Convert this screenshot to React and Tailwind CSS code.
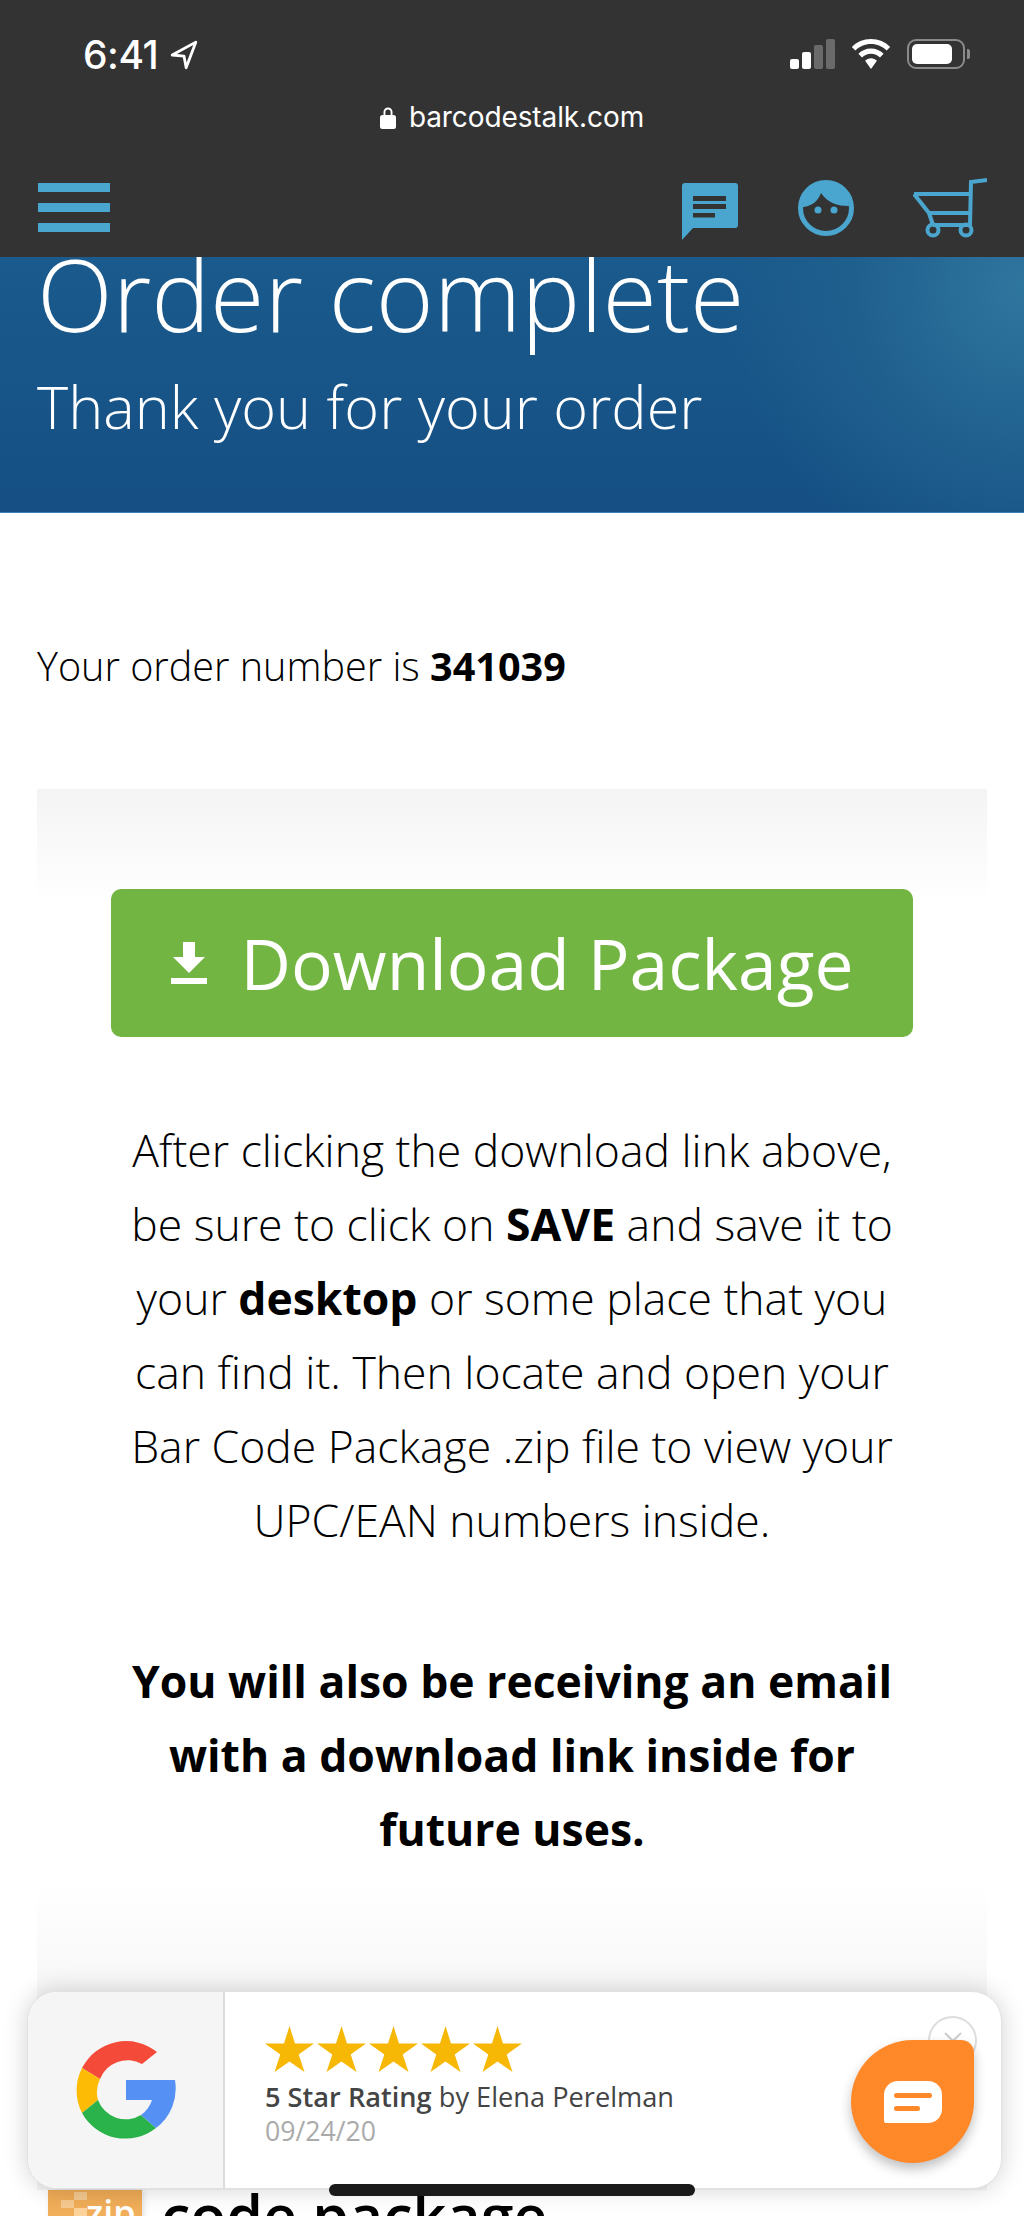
const BLUE = '#4ba6cf';

function StatusBar() {
  return (
    <div className="flex items-start justify-between h-[100px] pt-[35px] pl-[83px] pr-[54px]">
      <div className="flex items-center gap-[12px]">
        <span className="text-white text-[39px] leading-[40px] font-medium font-['Inter',sans-serif] tracking-[-0.5px]">6:41</span>
        <svg width="28" height="30" viewBox="0 0 26 28" fill="none">
          <path d="M24 2 L2 14 L13 15 L15 26 Z" stroke="white" strokeWidth="2.600" strokeLinejoin="round" />
        </svg>
      </div>
      <div className="flex items-center gap-[16px] pt-[4px]">
        <div className="flex items-end gap-[3px] h-[30px]">
          <div className="w-[9px] h-[10px] rounded-[2px] bg-white" />
          <div className="w-[9px] h-[17px] rounded-[2px] bg-white" />
          <div className="w-[9px] h-[24px] rounded-[2px] bg-[#6a6a6a]" />
          <div className="w-[9px] h-[30px] rounded-[2px] bg-[#6a6a6a]" />
        </div>
        <svg width="40" height="30" viewBox="0 0 40 30" fill="white">
          <path d="M20 0C12.500 0 5.700 3 .8 7.900l3.600 3.700C8.400 7.600 13.900 5.100 20 5.100s11.600 2.500 15.600 6.500l3.600-3.700C34.300 3 27.500 0 20 0z" />
          <path d="M20 9.600c-4.900 0-9.400 2-12.600 5.200l3.600 3.700c2.300-2.300 5.500-3.700 9-3.700s6.700 1.400 9 3.700l3.600-3.700C29.400 11.600 24.900 9.600 20 9.600z" />
          <path d="M20 19.300c-2.300 0-4.400.9-5.900 2.400L20 30l5.900-8.300c-1.500-1.500-3.600-2.400-5.900-2.400z" />
        </svg>
        <div className="flex items-center gap-[2px]">
          <div className="w-[58px] h-[30px] rounded-[9px] border-2 border-[#8a8a8a] p-[3px]">
            <div className="w-[40px] h-full rounded-[5px] bg-white" />
          </div>
          <div className="w-[3px] h-[10px] rounded-r-[2px] bg-[#8a8a8a]" />
        </div>
      </div>
    </div>
  );
}

function ChatIcon() {
  return (
    <svg width="58" height="57" viewBox="0 0 58 57" className="mt-[8px]">
      <path d="M4 0H54a3 3 0 0 1 3 3V42a3 3 0 0 1-3 3H12L1 57V3a3 3 0 0 1 3-3z" fill={BLUE} />
      <rect x="12" y="13" width="33" height="5" fill="#333333" />
      <rect x="12" y="21" width="33" height="5" fill="#333333" />
      <rect x="12" y="30" width="22" height="4.500" fill="#333333" />
    </svg>
  );
}

function FaceIcon() {
  return (
    <svg width="56" height="56" viewBox="0 0 56 56">
      <circle cx="28" cy="28" r="25.500" fill="none" stroke={BLUE} strokeWidth="5" />
      <path d="M5 27C5 11 15 2 28 2s23 9 23 24c-12 0-21-3-28-13C20 21 14 26 5 27z" fill={BLUE} />
      <circle cx="20" cy="30" r="3.500" fill={BLUE} />
      <circle cx="36" cy="30" r="3.500" fill={BLUE} />
    </svg>
  );
}

function CartIcon() {
  return (
    <svg width="74" height="60" viewBox="0 0 74 60" fill="none" stroke={BLUE} strokeWidth="4">
      <path d="M74 2 58 4 57 47H20" />
      <path d="M1 16H57M1 16 16 35H57M16 35 20 47" />
      <circle cx="20" cy="52" r="5.500" />
      <circle cx="53" cy="52" r="5.500" />
    </svg>
  );
}

function TopBar() {
  return (
    <div className="bg-[#333333]">
      <StatusBar />
      <div className="flex items-center justify-center gap-[13px] h-[34px]">
        <svg width="16" height="23" viewBox="0 0 16 23" fill="white">
          <path d="M3.500 10V6a4.500 4.500 0 0 1 9 0v4h-1.900V6a2.600 2.600 0 0 0-5.200 0v4z" />
          <rect x="0" y="9" width="16" height="14" rx="2.500" />
        </svg>
        <span className="text-white text-[28px] leading-[34px] font-['Inter',sans-serif] tracking-[-0.1px]">barcodestalk.com</span>
      </div>
      <div className="flex items-center justify-between h-[123px] pl-[38px] pr-[37px] pt-[24px]">
        <div className="flex flex-col gap-[11px] w-[72px]">
          <div className="h-[9px] bg-[#4ba6cf]" />
          <div className="h-[9px] bg-[#4ba6cf]" />
          <div className="h-[9px] bg-[#4ba6cf]" />
        </div>
        <div className="flex items-center gap-[59px]">
          <ChatIcon />
          <FaceIcon />
          <CartIcon />
        </div>
      </div>
    </div>
  );
}

function Banner() {
  return (
    <div className="h-[256px] overflow-hidden bg-[radial-gradient(circle_at_100%_12%,#2f769f_0px,#1f5f8e_170px,transparent_300px),linear-gradient(to_bottom,#1a5a8c,#154f83)] border-b border-[#3f7fb8] pl-[37px]">
      <h1 className="text-white text-[99px] leading-[110px] font-light -mt-[18px]">Order complete</h1>
      <p className="text-white text-[59.400px] leading-[70px] font-light mt-[22px]">Thank you for your order</p>
    </div>
  );
}

function Panel() {
  return (
    <div className="mx-[37px] mt-[96px] h-[1401px] pt-[100px] px-[74px] text-center bg-[linear-gradient(to_bottom,#f4f4f4_0px,#ffffff_115px,#ffffff_1095px,#f4f4f4_1240px)]">
      <div className="flex items-center justify-center gap-[34px] h-[148px] rounded-[10px] bg-[#73b543] text-white">
        <svg width="36" height="42" viewBox="0 0 36 42" fill="white">
          <path d="M12 0H24V15H34L18 31 2 15H12z" />
          <rect x="0" y="36" width="36" height="6" />
        </svg>
        <span className="text-[69.500px] leading-[90px] font-normal">Download Package</span>
      </div>
      <p className="mt-[76px] -mx-[30px] text-[44.500px] leading-[74px] font-light text-black">
        After clicking the download link above,<br />
        be sure to click on <b className="font-bold">SAVE</b> and save it to<br />
        your <b className="font-bold">desktop</b> or some place that you<br />
        can find it. Then locate and open your<br />
        Bar Code Package .zip file to view your<br />
        UPC/EAN numbers inside.
      </p>
      <p className="mt-[87px] -mx-[30px] text-[44.500px] leading-[74px] font-bold text-black">
        You will also be receiving an email<br />
        with a download link inside for<br />
        future uses.
      </p>
    </div>
  );
}

function GoogleLogo() {
  return (
    <svg width="100" height="100" viewBox="0 0 100 100">
      <path fill="#f44a3a" d="M81 12A49.500 49.500 0 0 0 6 28L24 39A29.500 29.500 0 0 1 66 24Z" />
      <path fill="#fdbb05" d="M6 28A49.500 49.500 0 0 0 6 73L22 60A29.500 29.500 0 0 1 24 39Z" />
      <path fill="#2bb34b" d="M6 73A49.500 49.500 0 0 0 80 88L65 75A29.500 29.500 0 0 1 22 60Z" />
      <path fill="#5591f5" d="M50 40H99A49.500 49.500 0 0 1 80 88L65 75A29 29 0 0 0 76 60H50Z" />
    </svg>
  );
}

function Star() {
  return (
    <svg width="49" height="46" viewBox="0 0 49 46" fill="#f6b805">
      <path d="M24.500 0 30 17.500H49L33.700 28.500 39.500 46 24.500 35.500 9.500 46 15.300 28.500 0 17.500H19z" />
    </svg>
  );
}

function ReviewPopup() {
  return (
    <div className="absolute left-[27px] top-[1991px] w-[975px] h-[198px] flex rounded-[30px] bg-white border border-[#e2e2e2] shadow-[0_0_24px_rgba(0,0,0,0.18)]">
      <div className="w-[197px] flex items-center justify-center rounded-l-[30px] bg-[#f5f5f5] border-r-2 border-[#dcdcdc]">
        <GoogleLogo />
      </div>
      <div className="pl-[40px] pt-[34px]">
        <div className="flex gap-[3px]">
          {[0, 1, 2, 3, 4].map((i) => <Star key={i} />)}
        </div>
        <p className="mt-[7px] text-[27.200px] leading-[36px] text-[#444444] font-normal">
          <span className="font-semibold">5 Star Rating</span> by Elena Perelman
        </p>
        <p className="text-[26.700px] leading-[32px] text-[#aaaaaa] font-normal">09/24/20</p>
      </div>
      <div className="absolute right-[24px] top-[24px] w-[49px] h-[49px] rounded-full border-2 border-[#dddddd] flex items-center justify-center">
        <svg width="20" height="20" viewBox="0 0 20 20" stroke="#cccccc" strokeWidth="2" fill="none">
          <path d="M2 2 18 18M18 2 2 18" />
        </svg>
      </div>
      <div className="absolute right-[27px] top-[48px] w-[123px] h-[123px] rounded-[62px_13px_62px_62px] bg-[#ff8829] shadow-[0_6px_12px_rgba(0,0,0,0.25)] flex items-center justify-center">
        <div className="w-[58px] h-[42px] rounded-t-[14px] rounded-br-[14px] rounded-bl-[2px] bg-white flex flex-col justify-center gap-[8px] px-[10px]">
          <div className="h-[5px] w-full rounded-full bg-[#ff8829]" />
          <div className="h-[5px] w-[26px] rounded-full bg-[#ff8829]" />
        </div>
      </div>
    </div>
  );
}

function ZipIcon() {
  return (
    <div className="relative w-[94px] h-[95px] shrink-0 bg-[linear-gradient(to_bottom,#eeaa55,#fdbd6b)] shadow-[2px_0_6px_rgba(0,0,0,0.12)] text-white text-[36px] font-semibold leading-[40px] pt-[3px] pl-[38px]">
      zip
      <div className="absolute left-[26px] top-[2px] w-[13px] h-[8px] bg-[#f5c98f]" />
      <div className="absolute left-[13px] top-[10px] w-[13px] h-[8px] bg-[#f5c98f]" />
      <div className="absolute left-[26px] top-[18px] w-[13px] h-[8px] bg-[#fcd39b]" />
    </div>
  );
}

export default function App() {
  return (
    <div className="relative w-[1024px] h-[2216px] overflow-hidden bg-white font-['Open_Sans',sans-serif]">
      <TopBar />
      <Banner />
      <p className="mt-[126px] pl-[37px] text-[39.600px] leading-[54px] font-light text-black">
        Your order number is <b className="font-bold">341039</b>
      </p>
      <Panel />
      <div className="flex items-start gap-[19px] pl-[48px]">
        <ZipIcon />
        <span className="-mt-[10px] text-[59px] leading-[70px] font-semibold text-black whitespace-nowrap">code package</span>
      </div>
      <ReviewPopup />
      <div className="absolute left-[329px] top-[2184px] w-[366px] h-[12px] rounded-full bg-[#1a1a1a]" />
    </div>
  );
}
